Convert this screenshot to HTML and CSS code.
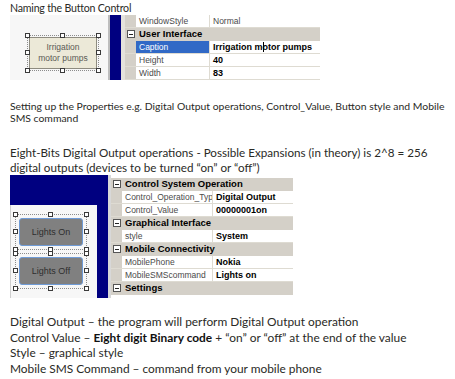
FILE: index.html
```html
<!DOCTYPE html>
<html lang="en">
<head>
    <meta charset="UTF-8">
    <title>Button Control Setup</title>
    <link rel="stylesheet" href="styles.css">
</head>
<body>
    <div class="page">
        <p class="title">Naming the Button Control</p>

        <!-- First capture: designer + property grid -->
        <div class="shot shot-one">
            <div class="designer">
                <div class="sel">
                    <span class="h tl"></span><span class="h tc"></span><span class="h tr"></span>
                    <span class="h ml"></span><span class="h mr"></span>
                    <span class="h bl"></span><span class="h bc"></span><span class="h br"></span>
                    <div class="ctl ctl-beige">Irrigation<br>motor pumps</div>
                </div>
            </div>
            <div class="split"></div>
            <div class="navy-bar"></div>
            <div class="strip"></div>
            <div class="grid grid-one">
                <div class="row"><span class="gut"></span><span class="name">WindowStyle</span><span class="val plain">Normal</span></div>
                <div class="row head"><span class="gut"><span class="tog"></span></span><span class="cat">User Interface</span></div>
                <div class="row"><span class="gut"></span><span class="name picked">Caption</span><span class="val">Irrigation m<span class="caret"></span>otor pumps</span></div>
                <div class="row"><span class="gut"></span><span class="name">Height</span><span class="val">40</span></div>
                <div class="row"><span class="gut"></span><span class="name">Width</span><span class="val">83</span></div>
            </div>
        </div>

        <p class="para-small">Setting up the Properties e.g. Digital Output operations, Control_Value, Button style and Mobile<br>SMS command</p>

        <p class="para">Eight-Bits Digital Output operations - Possible Expansions (in theory) is 2^8 = 256<br>digital outputs (devices to be turned “on” or “off”)</p>

        <!-- Second capture: two buttons + grid -->
        <div class="shot shot-two">
            <div class="navy-frame">
                <div class="designer designer-two">
                    <div class="sel">
                        <span class="h tl"></span><span class="h tc"></span><span class="h tr"></span>
                        <span class="h ml"></span><span class="h mr"></span>
                        <span class="h bl"></span><span class="h bc"></span><span class="h br"></span>
                        <div class="ctl ctl-grey">Lights On</div>
                    </div>
                    <div class="sel">
                        <span class="h tl"></span><span class="h tc"></span><span class="h tr"></span>
                        <span class="h ml"></span><span class="h mr"></span>
                        <span class="h bl"></span><span class="h bc"></span><span class="h br"></span>
                        <div class="ctl ctl-grey">Lights Off</div>
                    </div>
                </div>
            </div>
            <div class="split split-two"></div>
            <div class="grid grid-two">
                <div class="row head"><span class="gut"><span class="tog"></span></span><span class="cat">Control System Operation</span></div>
                <div class="row"><span class="gut"></span><span class="name">Control_Operation_Typ</span><span class="val">Digital Output</span></div>
                <div class="row"><span class="gut"></span><span class="name">Control_Value</span><span class="val">00000001on</span></div>
                <div class="row head"><span class="gut"><span class="tog"></span></span><span class="cat">Graphical Interface</span></div>
                <div class="row"><span class="gut"></span><span class="name">style</span><span class="val">System</span></div>
                <div class="row head"><span class="gut"><span class="tog"></span></span><span class="cat">Mobile Connectivity</span></div>
                <div class="row"><span class="gut"></span><span class="name">MobilePhone</span><span class="val">Nokia</span></div>
                <div class="row"><span class="gut"></span><span class="name">MobileSMScommand</span><span class="val">Lights on</span></div>
                <div class="row head"><span class="gut"><span class="tog"></span></span><span class="cat">Settings</span></div>
            </div>
        </div>

        <p class="para para-list">
            Digital Output – the program will perform Digital Output operation<br>
            Control Value – <b>Eight digit Binary code</b> + “on” or “off” at the end of the value<br>
            Style – graphical style<br>
            Mobile SMS Command – command from your mobile phone
        </p>
    </div>
</body>
</html>
```

FILE: styles.css
```css
:root {
    --navy: #000080;
    --panel: #d4d0c8;
    --ink: #2a2a26;
    --grid-text: #4a4a4a;
}

* {
    margin: 0;
    padding: 0;
    box-sizing: border-box;
}

body {
    background: #fff;
    font-family: Lato, 'Liberation Sans', sans-serif;
    color: var(--ink);
}

.page {
    padding: 1px 0 0 10px;
}

/* Text blocks */
.title {
    font-size: 10.6px;
    letter-spacing: -0.2px;
    line-height: 14px;
    white-space: nowrap;
}

.para-small {
    margin-top: 20px;
    font-size: 10.4px;
    line-height: 12px;
    white-space: nowrap;
}

.para {
    margin-top: 21px;
    font-size: 11.65px;
    line-height: 15px;
    white-space: nowrap;
}

.para-list {
    margin-top: 16px;
    font-size: 11.9px;
    line-height: 15.5px;
}

.para-list b {
    color: #111;
}

/* Screen captures */
.shot {
    display: flex;
    align-items: flex-start;
}

.shot-one {
    height: 65px;
}

.shot-two {
    height: 123px;
}

.designer {
    width: 98px;
    height: 100%;
    background: #f7f7f7;
    padding: 20px 0 0 17px;
}

.split {
    width: 2px;
    height: 100%;
    background: #bdbdbd;
}

.navy-bar {
    width: 11px;
    height: 100%;
    background: var(--navy);
}

.strip {
    width: 4px;
    height: 100%;
    background: #e4e2dc;
}

.navy-frame {
    width: 98px;
    height: 100%;
    background: var(--navy);
    padding: 30px 11px 0 0;
}

.designer-two {
    width: 87px;
    display: flex;
    flex-direction: column;
    gap: 3px;
    padding: 9px 0 0 4px;
    border-left: 1px solid #cfcfcf;
}

.split-two {
    width: 3px;
    background: #d8d8d8;
}

/* Selected control with sizing handles */
.sel {
    position: relative;
    width: 72px;
    height: 36px;
    border: 1px dotted #8c8c8c;
    padding: 1px;
}

.h {
    position: absolute;
    width: 5px;
    height: 5px;
    background: #fff;
    border: 1px solid #3a3a3a;
}

.tl { top: -3px; left: -3px; }
.tc { top: -3px; left: 32px; }
.tr { top: -3px; right: -3px; }
.ml { top: 14px; left: -3px; }
.mr { top: 14px; right: -3px; }
.bl { bottom: -3px; left: -3px; }
.bc { bottom: -3px; left: 32px; }
.br { bottom: -3px; right: -3px; }

.ctl {
    height: 100%;
    display: flex;
    align-items: center;
    justify-content: center;
    text-align: center;
    font-family: 'Liberation Sans', Arial, sans-serif;
    font-size: 8.5px;
    line-height: 11px;
}

.ctl-beige {
    background: #ece9d8;
    border: 1px solid #8e8c80;
    color: #5a5a55;
}

.ctl-grey {
    margin: 2px 2px;
    height: calc(100% - 4px);
    background: #808080;
    border: 1.5px solid #6f9bd6;
    border-radius: 3px;
    color: #2e2e2e;
    font-size: 9px;
}

/* Property grids */
.grid {
    font-family: 'Liberation Sans', Arial, sans-serif;
    font-size: 8.5px;
    background: #fff;
}

.grid-one {
    width: 195px;
}

.grid-two {
    width: 182px;
    margin-top: 3px;
}

.row {
    display: grid;
    grid-template-columns: 11px 74px 1fr;
    height: 13px;
    border-bottom: 1px solid #dedbd2;
}

.grid-two .row {
    grid-template-columns: 11px 91px 1fr;
}

.row.head,
.grid-two .row.head {
    grid-template-columns: 11px 1fr;
    background: var(--panel);
    border-bottom-color: var(--panel);
}

.gut {
    background: var(--panel);
    display: flex;
    align-items: center;
    justify-content: center;
}

.tog {
    width: 8px;
    height: 8px;
    border: 1px solid #555;
    background: #fff;
    display: flex;
    align-items: center;
    justify-content: center;
}

.tog::before {
    content: "";
    width: 4px;
    height: 1px;
    background: #222;
}

.name {
    padding-left: 3px;
    color: var(--grid-text);
    border-right: 1px solid #dedbd2;
    white-space: nowrap;
    overflow: hidden;
    line-height: 12px;
}

.name.picked {
    background: #3169c6;
    color: #fff;
}

.val {
    padding-left: 3px;
    font-weight: 700;
    color: #000;
    white-space: nowrap;
    overflow: hidden;
    line-height: 12px;
    font-size: 9px;
}

.val.plain {
    font-weight: 400;
    color: var(--grid-text);
    font-size: 8.5px;
}

.caret {
    display: inline-block;
    width: 1px;
    height: 10px;
    background: #000;
    vertical-align: -2px;
    margin-right: -1px;
}

.cat {
    padding-left: 3px;
    font-weight: 700;
    font-size: 9.5px;
    line-height: 12px;
    color: #000;
}
```
